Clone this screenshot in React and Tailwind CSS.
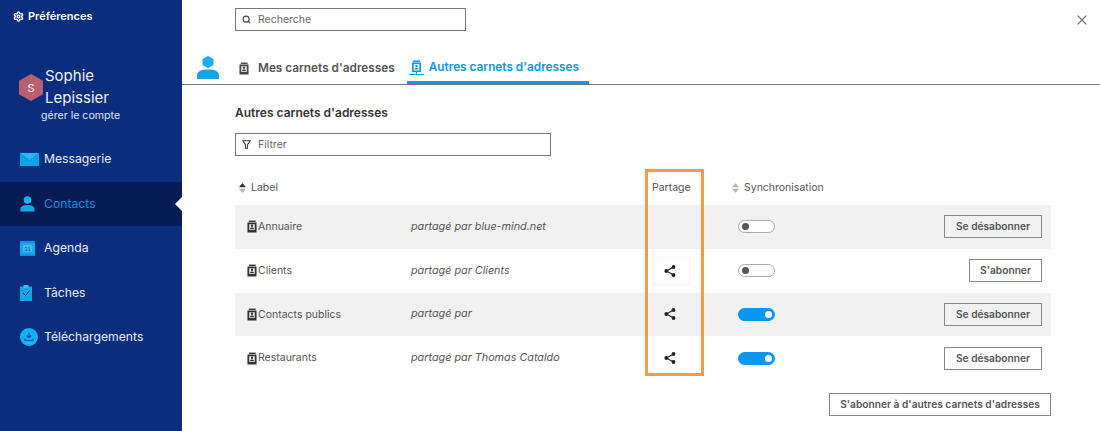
import React from 'react';
import { Search, X, Settings } from 'lucide-react';

const font = "font-['Inter','Open_Sans',sans-serif]";

const NAV = [
  { label: 'Messagerie', icon: 'mail' },
  { label: 'Contacts', icon: 'contact', active: true },
  { label: 'Agenda', icon: 'agenda' },
  { label: 'Tâches', icon: 'tasks' },
  { label: 'Téléchargements', icon: 'download' },
];

const ROWS = [
  { name: 'Annuaire', by: 'partagé par blue-mind.net', share: false, sync: false, action: 'Se désabonner', shaded: true },
  { name: 'Clients', by: 'partagé par Clients', share: true, sync: false, action: "S'abonner", focused: true },
  { name: 'Contacts publics', by: 'partagé par', share: true, sync: true, action: 'Se désabonner', shaded: true },
  { name: 'Restaurants', by: 'partagé par Thomas Cataldo', share: true, sync: true, action: 'Se désabonner' },
];

const NavIcon = ({ type }) => {
  if (type === 'mail') {
    return (
      <svg width="19" height="13" viewBox="0 0 19 13">
        <rect width="19" height="13" fill="#0ea5e9" />
        <path d="M0 0 L9.5 7.5 L19 0 Z" fill="#2bb8f2" />
        <path d="M0 0.3 L9.5 7.5 L19 0.3" fill="none" stroke="#0a86d0" strokeWidth="0.7" />
      </svg>
    );
  }
  if (type === 'contact') {
    return (
      <svg width="15" height="16" viewBox="0 0 15 16">
        <circle cx="7.5" cy="4" r="3.8" fill="#17b3f0" />
        <path d="M0.5 15.5 V13 C0.5 10.5 3.5 9 7.5 9 C11.5 9 14.5 10.5 14.5 13 V15.5 Z" fill="#0ea5e9" />
      </svg>
    );
  }
  if (type === 'agenda') {
    return (
      <svg width="15" height="15" viewBox="0 0 15 15">
        <rect width="15" height="15" fill="#0b94de" />
        <rect x="0" y="2" width="15" height="11" fill="#1aa7eb" />
        <rect x="3" y="4" width="9" height="7" fill="#3fbdf2" />
        <text x="7.5" y="10" fontSize="6" textAnchor="middle" fill="#0a4a9c" fontFamily="Liberation Sans">31</text>
      </svg>
    );
  }
  if (type === 'tasks') {
    return (
      <svg width="12" height="16" viewBox="0 0 12 16">
        <rect x="0" y="1.5" width="12" height="14.5" fill="#0ea5e9" />
        <rect x="3.5" y="0" width="5" height="3" fill="#38bdf8" />
        <path d="M3 8 L5.5 10.5 L9.5 5.5" stroke="#0a2d7d" strokeWidth="1" fill="none" />
      </svg>
    );
  }
  return (
    <svg width="18" height="18" viewBox="0 0 18 18">
      <circle cx="9" cy="9" r="9" fill="#0cb4f2" />
      <path d="M9 4.5 V9.5 M6.8 7.5 L9 9.7 L11.2 7.5" stroke="#0a4a9c" strokeWidth="1.2" fill="none" />
      <path d="M5 10.5 V12.5 H13 V10.5" stroke="#0a4a9c" strokeWidth="1.2" fill="none" />
    </svg>
  );
};

const BookIcon = ({ className = 'text-[#333]', size = 10 }) => (
  <svg width={size} height={Math.round(size * 1.3)} viewBox="0 0 11 14" className={className}>
    <path d="M2 0.5 H9.5 V2 H2 Z" fill="currentColor" />
    <path fillRule="evenodd" d="M0.5 2.5 H10.5 V13.5 H0.5 Z M2.5 4.5 V10.8 H8.5 V4.5 Z" fill="currentColor" />
    <circle cx="5.5" cy="6.2" r="1.3" fill="currentColor" />
    <path d="M3.2 10 C3.2 8.6 4.2 8 5.5 8 C6.8 8 7.8 8.6 7.8 10 Z" fill="currentColor" />
  </svg>
);

// the active tab's book sits on a flat base line
const SharedBookIcon = () => (
  <svg width="15" height="16" viewBox="0 0 15 16" className="text-[#0a98ee]">
    <path d="M4 0.5 H11 V2 H4 Z" fill="currentColor" />
    <path fillRule="evenodd" d="M3 2.5 H12 V12 H3 Z M4.7 4 V10.5 H10.3 V4 Z" fill="currentColor" />
    <circle cx="7.5" cy="6" r="1.2" fill="currentColor" />
    <path d="M5.5 9.5 C5.5 8.2 6.3 7.7 7.5 7.7 C8.7 7.7 9.5 8.2 9.5 9.5 Z" fill="currentColor" />
    <path d="M0 14.5 H15" stroke="currentColor" strokeWidth="1" />
    <path d="M7.5 12 V14.5" stroke="currentColor" strokeWidth="1" />
  </svg>
);

const ShareIcon = () => (
  <svg width="12" height="12" viewBox="0 0 12 12" className="text-[#222]">
    <path d="M9.5 2 L2.5 6 L9.5 10" stroke="currentColor" strokeWidth="1.1" fill="none" />
    <circle cx="9.5" cy="2" r="1.9" fill="currentColor" />
    <circle cx="2.3" cy="6" r="1.9" fill="currentColor" />
    <circle cx="9.5" cy="10" r="1.9" fill="currentColor" />
  </svg>
);

const SortIcon = ({ up }) => (
  <svg width="7" height="10" viewBox="0 0 7 10">
    <path d="M3.5 0 L7 4.2 H0 Z" fill={up ? '#333' : '#b5b5b5'} />
    <path d="M3.5 10 L7 5.8 H0 Z" fill="#b5b5b5" />
  </svg>
);

const Toggle = ({ on }) =>
  on ? (
    <div className="flex h-[13px] w-[37px] items-center justify-end rounded-full bg-[#0a98ee] pr-[3px]">
      <div className="h-[7px] w-[7px] rounded-full bg-white" />
    </div>
  ) : (
    <div className="flex h-[13px] w-[37px] items-center rounded-full border border-[#aaa] bg-white pl-[3px]">
      <div className="h-[7px] w-[7px] rounded-full bg-[#555]" />
    </div>
  );

const OutlineButton = ({ children, className = '' }) => (
  <button className={`flex h-[23px] items-center justify-center border border-[#888] text-[10.2px] font-semibold text-[#555] ${className}`}>
    {children}
  </button>
);

export default function App() {
  return (
    <div className={`relative flex h-[431px] w-[1100px] overflow-hidden bg-white ${font}`}>
      <aside className="flex w-[182px] shrink-0 flex-col bg-[#0a2d7d] text-white">
        <div className="flex items-center gap-[4px] pl-[13px] pt-[10px] text-[11px] font-semibold leading-[13px]">
          <Settings size={11} strokeWidth={3} />
          Préférences
        </div>
        <div className="flex items-center pl-[19px] pt-[42px]">
          <svg width="24" height="27" viewBox="0 0 24 27" className="shrink-0">
            <path d="M12 0 L24 6.7 V20.3 L12 27 L0 20.3 V6.7 Z" fill="#b9606f" />
            <text x="12" y="18" fontSize="11" textAnchor="middle" fill="#fff" fontFamily="Inter">S</text>
          </svg>
          <div className="pl-[2px] text-[15px] leading-[22px] text-[#eef2ff]">
            Sophie
            <br />
            Lepissier
          </div>
        </div>
        <div className="pl-[41px] text-[10.6px] leading-[14px] text-[#dfe6f7]">gérer le compte</div>
        <nav className="mt-[14px] flex flex-col">
          {NAV.map((item) => (
            <div
              key={item.label}
              className={`relative flex h-[44.5px] items-center ${item.active ? 'bg-[#051c54] text-[#0a8fe6]' : 'text-[#e8edfa]'}`}
            >
              <div className="flex w-[44px] shrink-0 justify-start pl-[20px]">
                <NavIcon type={item.icon} />
              </div>
              <span className="text-[12.2px]">{item.label}</span>
              {item.active && (
                <div className="absolute right-0 top-[15.5px] h-0 w-0 border-y-[7px] border-r-[7px] border-y-transparent border-r-white" />
              )}
            </div>
          ))}
        </nav>
      </aside>

      <main className="flex min-w-0 flex-1 flex-col">
        <div className="flex items-center justify-between pl-[53px] pr-[10px] pt-[8px]">
          <div className="flex h-[23px] w-[231px] items-center gap-[7px] border border-[#777] px-[6px] text-[10.5px] text-[#666]">
            <Search size={9} strokeWidth={3} className="text-[#444]" />
            Recherche
          </div>
          <X size={16} strokeWidth={1.8} className="text-[#777]" />
        </div>

        <div className="mt-[20px] flex h-[34px] items-end border-b border-[#777] pl-[15px]">
          <svg width="22" height="23" viewBox="0 0 22 23" className="mb-[5px]">
            <path d="M11 0 L16.5 3 V9 L11 12 L5.5 9 V3 Z" fill="#12b0f0" />
            <path d="M0 23 V19 C0 15.5 4 13.5 11 13.5 C18 13.5 22 15.5 22 19 V23 Z" fill="#0ea5e9" />
          </svg>
          <div className="ml-[20px] flex h-[33px] items-center gap-[9px] pt-[2px] text-[11.8px] font-semibold text-[#555]">
            <BookIcon className="text-[#444]" size={10} />
            Mes carnets d'adresses
          </div>
          <div className="ml-[12px] flex h-[33px] items-center gap-[5px] border-b-[3px] border-[#0a98ee] pl-[2px] pr-[10px] pt-[4px] text-[11.8px] font-semibold text-[#0a98ee]">
            <SharedBookIcon />
            Autres carnets d'adresses
          </div>
        </div>

        <div className="flex flex-col pl-[53px] pr-[49px]">
          <h2 className="pt-[20px] text-[12px] font-semibold leading-[15px] text-[#333]">Autres carnets d'adresses</h2>
          <div className="mt-[13px] flex h-[23px] w-[316px] items-center gap-[7px] border border-[#777] px-[6px] text-[10.5px] text-[#666]">
            <svg width="9" height="9" viewBox="0 0 9 9" className="text-[#444]">
              <path d="M0.7 0.7 H8.3 L5.5 4.6 V8.3 H3.5 V4.6 Z" fill="none" stroke="currentColor" strokeWidth="1.1" />
            </svg>
            Filtrer
          </div>

          <div className="mt-[14px] grid h-[35px] grid-cols-[417px_85px_1fr] items-center text-[10.5px] text-[#555]">
            <div className="flex items-center gap-[5px] pl-[4px]">
              <SortIcon up />
              Label
            </div>
            <div>Partage</div>
            <div className="-ml-[5px] flex items-center gap-[5px]">
              <SortIcon />
              Synchronisation
            </div>
          </div>

          {ROWS.map((row) => (
            <div
              key={row.name}
              className={`grid h-[43.8px] grid-cols-[176px_241px_38px_48px_37px_1fr] items-center text-[10.5px] text-[#555] ${row.shaded ? 'bg-[#f1f1f1]' : 'bg-white'}`}
            >
              <div className="flex items-center gap-[1px] pl-[12px]">
                <BookIcon />
                {row.name}
              </div>
              <div className="text-[10.8px] italic">{row.by}</div>
              <div className={`flex h-[28px] items-center justify-center pr-[3px] ${row.focused ? 'border border-[#f1f7fd]' : ''}`}>
                {row.share && <ShareIcon />}
              </div>
              <div />
              <Toggle on={row.sync} />
              <div className="flex justify-end pr-[9px]">
                <OutlineButton className={row.action === "S'abonner" ? 'w-[73px]' : 'w-[98px]'}>{row.action}</OutlineButton>
              </div>
            </div>
          ))}

          <div className="mt-[13px] flex justify-end">
            <OutlineButton className="w-[222px]">S'abonner à d'autres carnets d'adresses</OutlineButton>
          </div>
        </div>
      </main>

      <div className="pointer-events-none absolute left-[645px] top-[169px] h-[207px] w-[59px] border-[3px] border-[#f79a45]" />
    </div>
  );
}
